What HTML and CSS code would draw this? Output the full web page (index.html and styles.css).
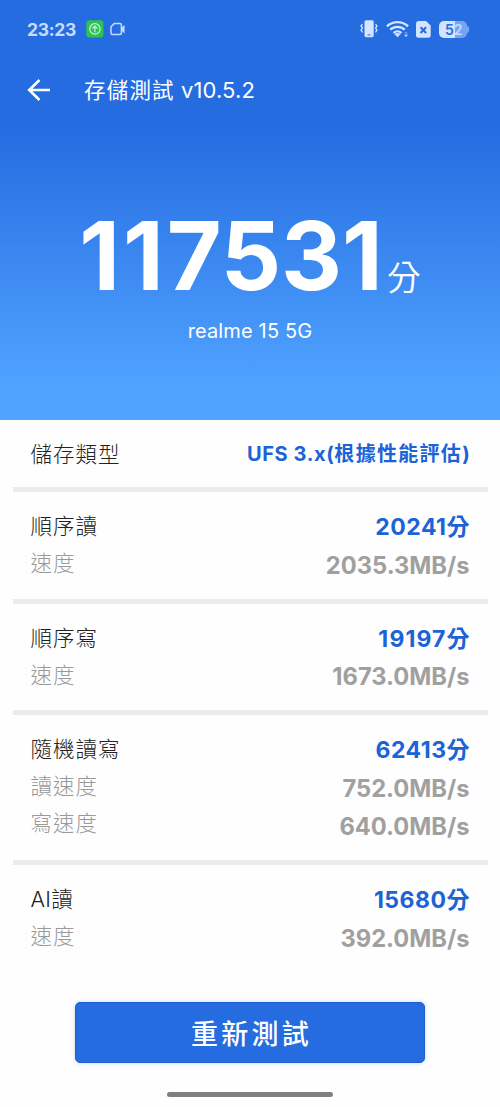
FILE: index.html
```html
<!DOCTYPE html>
<html lang="zh-Hant">
<head>
<meta charset="utf-8">
<title>存儲測試</title>
<link rel="stylesheet" href="styles.css">
</head>
<body>
<header class="hero">
  <div class="status">
    <span class="clock">23:23</span>
    <svg class="app-badge" width="18" height="18" viewBox="0 0 18 18"><rect x=".3" y=".3" width="17.2" height="17.2" rx="3.2" fill="#2dc251"/><g fill="none" stroke="#c9f6dc" stroke-width="1.2"><circle cx="8.9" cy="8.9" r="5.2"/><path d="M8.9 12.2V6M6.3 8.7l2.6-2.6 2.6 2.6"/></g></svg>
    <svg class="camera" width="17" height="14" viewBox="0 0 17 14"><path d="M4.4 1.4h5.500q1.500 0 1.500 1.500v8q0 1.500-1.500 1.500H2.500Q1 12.400 1 10.900V4.800z" fill="none" stroke="#c5dcff" stroke-width="1.500" stroke-linejoin="round"/><path d="M11.500 6l3-3.200v8.600l-3-2.900z" fill="#c5dcff"/></svg>
    <span class="spacer"></span>
    <svg class="vibrate" width="18" height="18" viewBox="0 0 18 18"><rect x="4.500" y=".2" width="9.200" height="17" rx="1.600" fill="#d2e4ff"/><path d="M7.500 14.900h3" stroke="#256ce1" stroke-width="1"/><path d="M2.500 4.200L1 6l1.500 2L1 10l1.500 2.300M15.500 4.200L17 6l-1.500 2L17 10l-1.500 2.300" fill="none" stroke="#d2e4ff" stroke-width="1.300"/></svg>
    <svg class="wifi" width="24" height="18" viewBox="0 0 24 18"><g fill="none" stroke="#d2e4ff" stroke-width="2.300"><path d="M.9 6.300c5.900-5.600 15.300-5.600 21.200 0"/><path d="M4.200 9.700c4.100-3.900 10.500-3.900 14.600 0"/><path d="M7.500 13c2.300-2.200 5.700-2.200 8 0"/></g><path d="M8.300 14q3.200-2.200 6.400 0l-3.200 3.300z" fill="#d2e4ff"/><path d="M18 13.500l2-2 2 2z" fill="#79a9f5"/><path d="M18 14.700h4l-2 2.300z" fill="#d2e4ff"/></svg>
    <svg class="sim" width="15" height="17" viewBox="0 0 15 17"><path d="M2.300 0H10l4.700 4.500v10q0 2.300-2.300 2.300H2.300Q0 16.800 0 14.500v-12Q0 0 2.300 0z" fill="#d2e4ff"/><path d="M4.600 6.200l5.500 5.800M10.100 6.200L4.600 12" stroke="#256ce1" stroke-width="2"/></svg>
    <span class="battery">5<b>2</b></span><span class="battery-tip"></span>
  </div>
  <div class="bar">
    <svg width="24" height="24" viewBox="0 0 24 24"><path d="M23 12H2.500M12.500 2L2.200 12l10.300 10" fill="none" stroke="#fff" stroke-width="2.600"/></svg>
    <h1 class="title"><span class="title-name">存儲測試</span> <span class="version">v10.5.2</span></h1>
  </div>
  <div class="score"><span class="score-num"><span class="ones">11</span>7531</span><span class="score-unit">分</span></div>
  <div class="device">realme 15 5G</div>
</header>
<main class="results">
  <section class="group type">
    <div class="labels"><span>儲存類型</span></div>
    <div class="values"><span class="points"><span class="ufs">UFS 3.x(</span><span class="estimate">根據性能評估</span>)</span></div>
  </section>
  <section class="group">
    <div class="labels"><span>順序讀</span><span class="sub">速度</span></div>
    <div class="values"><span class="points">20241分</span><span class="speed">2035.3MB/s</span></div>
  </section>
  <section class="group">
    <div class="labels"><span>順序寫</span><span class="sub">速度</span></div>
    <div class="values"><span class="points"><span class="loose">19197</span>分</span><span class="speed">1673.0MB/s</span></div>
  </section>
  <section class="group">
    <div class="labels"><span>隨機讀寫</span><span class="sub">讀速度</span><span class="sub">寫速度</span></div>
    <div class="values"><span class="points">62413分</span><span class="speed">752.0MB/s</span><span class="speed">640.0MB/s</span></div>
  </section>
  <section class="group">
    <div class="labels"><span><span class="latin">AI</span>讀</span><span class="sub">速度</span></div>
    <div class="values"><span class="points">15680分</span><span class="speed">392.0MB/s</span></div>
  </section>
</main>
<button class="retest">重新測試</button>
<div class="home"></div>
</body>
</html>
```
FILE: styles.css
```css
* { box-sizing: border-box; }
body {
  margin: 0;
  width: 500px;
  height: 1107px;
  overflow: hidden;
  background: #fefefe;
  font-family: Inter, "Noto Sans CJK TC", sans-serif;
  color: #222;
}
.hero {
  height: 420px;
  background: linear-gradient(#256ce1 0, #256ce1 125px, #50a3ff 390px, #50a3ff 100%);
  color: #fff;
}
.status {
  display: flex;
  align-items: center;
  height: 58px;
  padding: 0 31px 0 27px;
}
.clock { width: 59px; font-size: 17.500px; font-weight: 700; color: #c5dcff; letter-spacing: -.3px; }
.camera { margin-left: 6px; }
.spacer { flex: 1; }
.wifi { margin-left: 8px; }
.sim { margin-left: 6px; }
.battery {
  width: 28px;
  height: 17px;
  margin-left: 8px;
  border-radius: 5px;
  background: linear-gradient(90deg, #d2e4ff 16px, #75a5f2 16px);
  color: #256ce1;
  font-size: 14px;
  font-weight: 600;
  line-height: 17px;
  padding-left: 6px;
}
.battery b { font-weight: 600; color: #c5dcff; }
.battery-tip { width: 2px; height: 7px; border-radius: 0 2px 2px 0; background: #75a5f2; }
.bar { display: flex; align-items: center; height: 64px; padding-left: 27px; gap: 33px; }
.title { margin: 0; font-size: 22px; font-weight: 400; line-height: 30px; white-space: nowrap; }
.title-name { font-size: 21.500px; letter-spacing: 1.200px; }
.version { font-size: 22px; letter-spacing: .1px; }
.score { display: flex; justify-content: center; align-items: baseline; height: 178px; padding-top: 74px; line-height: 120px; }
.score-num { font-size: 94.500px; font-weight: 700; letter-spacing: 0; }
.ones { letter-spacing: 3px; }
.score-unit { font-size: 34px; margin-left: 4px; font-weight: 350; }
.device { text-align: center; font-size: 20px; letter-spacing: .15px; line-height: 30px; margin-top: 16px; }
.results { padding: 0 12.500px; }
.group {
  display: flex;
  justify-content: space-between;
  height: 111.500px;
  padding: 15px 18px 0;
  border-bottom: 5.500px solid #ebebeb;
}
.group:first-child { height: 72px; }
.group:nth-child(4) { height: 150px; }
.group:last-child { border: 0; }
.labels, .values { display: flex; flex-direction: column; }
.labels { padding-top: 1px; }
.labels > span { font-size: 21.500px; line-height: 37px; font-weight: 300; letter-spacing: 1px; }
.labels .sub { color: #999; }
.labels .latin { letter-spacing: .3px; }
.values { align-items: flex-end; padding-top: 1px; font-weight: 700; font-size: 23.700px; line-height: 38.500px; white-space: nowrap; }
.values > span { height: 38.500px; }
.points { color: #1b63d6; font-size: 23px; letter-spacing: .5px; margin-right: -.5px; }
.loose { letter-spacing: 1.100px; }
.type .points { font-size: 20px; letter-spacing: .3px; }
.type .estimate { letter-spacing: 1.300px; }
.type .ufs { letter-spacing: .6px; }
.type .values { padding-top: 0; }
.speed { color: #a0a0a0; }
.retest {
  display: block;
  width: 350px;
  height: 61px;
  margin: 25px auto 0;
  border: 1px solid #1d5fce;
  border-radius: 5px;
  background: #256ce1;
  box-shadow: 0 0 4px #256ce144;
  color: #fff;
  font: 500 27px/56px Inter, "Noto Sans CJK TC", sans-serif;
  letter-spacing: 3.300px;
  padding: 4px 0 0 3px;
}
.home { width: 166px; height: 5px; margin: 29px auto 0; border-radius: 3px; background: #808080; }
```
